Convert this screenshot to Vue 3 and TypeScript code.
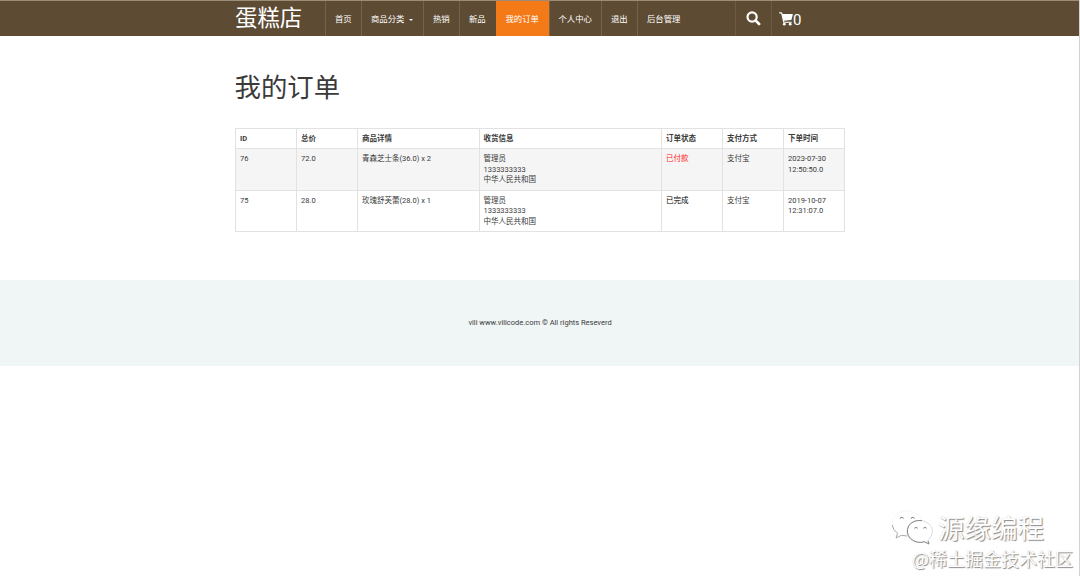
<script setup lang="ts">
interface NavItem { label: string; width: number; active?: boolean; caret?: boolean }
interface Order {
  id: number
  total: string
  detail: string
  receiver: string[]
  status: string
  paid: boolean
  payment: string
  time: string[]
}

const navItems: NavItem[] = [
  { label: '首页', width: 36 },
  { label: '商品分类', width: 62, caret: true },
  { label: '热销', width: 36 },
  { label: '新品', width: 36.5 },
  { label: '我的订单', width: 53, active: true },
  { label: '个人中心', width: 52.5 },
  { label: '退出', width: 36 },
  { label: '后台管理', width: 54 },
]

const columns: { title: string; width: number }[] = [
  { title: 'ID', width: 61 },
  { title: '总价', width: 61 },
  { title: '商品详情', width: 121.5 },
  { title: '收货信息', width: 182.5 },
  { title: '订单状态', width: 61 },
  { title: '支付方式', width: 61 },
  { title: '下单时间', width: 61 },
]

const orders: Order[] = [
  {
    id: 76, total: '72.0', detail: '青森芝士条(36.0) x 2',
    receiver: ['管理员', '1333333333', '中华人民共和国'],
    status: '已付款', paid: true, payment: '支付宝', time: ['2023-07-30', '12:50:50.0'],
  },
  {
    id: 75, total: '28.0', detail: '玫瑰舒芙蕾(28.0) x 1',
    receiver: ['管理员', '1333333333', '中华人民共和国'],
    status: '已完成', paid: false, payment: '支付宝', time: ['2019-10-07', '12:31:07.0'],
  },
]
</script>

<template>
  <div class="page">
    <header class="header">
      <div class="container bar">
        <div class="brand">蛋糕店</div>
        <nav class="nav">
          <a
            v-for="item in navItems"
            :key="item.label"
            class="nav-item"
            :class="{ active: item.active }"
            :style="{ width: item.width + 'px' }"
          >{{ item.label }}<span v-if="item.caret" class="caret"></span></a>
        </nav>
        <div class="tools">
          <a class="tool search">
            <svg width="15" height="15" viewBox="0 0 15 15">
              <circle cx="6.1" cy="6" r="4.6" fill="none" stroke="#fff" stroke-width="2.2" />
              <path d="M9.5 9.4 13.1 13" stroke="#fff" stroke-width="2.7" stroke-linecap="round" />
            </svg>
          </a>
          <a class="tool cart">
            <svg width="14" height="14" viewBox="0 0 14 14" fill="#fff">
              <path d="M0 .7Q0 .2.6.2H2.5Q3 .2 3.2.8L3.5 2H13.4Q14 2 13.8 2.7L12.5 7.5Q12.3 8 11.8 8.1L5 8.8 5.2 9.7H12.3Q12.8 9.7 12.8 10.2T12.3 10.8H4.8Q4.3 10.8 4.2 10.3L2.2 1.4H.6Q0 1.4 0 .7Z" />
              <circle cx="5.3" cy="12.2" r="1.4" />
              <circle cx="11.2" cy="12.2" r="1.4" />
            </svg>
            <span class="count">0</span>
          </a>
        </div>
      </div>
    </header>

    <main class="container main">
      <h1 class="title">我的订单</h1>
      <table class="orders">
        <colgroup>
          <col v-for="col in columns" :key="col.title" :style="{ width: col.width + 'px' }" />
        </colgroup>
        <thead>
          <tr><th v-for="col in columns" :key="col.title">{{ col.title }}</th></tr>
        </thead>
        <tbody>
          <tr v-for="order in orders" :key="order.id">
            <td>{{ order.id }}</td>
            <td>{{ order.total }}</td>
            <td>{{ order.detail }}</td>
            <td><div v-for="line in order.receiver" :key="line">{{ line }}</div></td>
            <td><span :class="order.paid ? 'paid' : 'done'">{{ order.status }}</span></td>
            <td>{{ order.payment }}</td>
            <td><div v-for="line in order.time" :key="line">{{ line }}</div></td>
          </tr>
        </tbody>
      </table>
    </main>

    <footer class="footer">vili www.vilicode.com © All rights Reseverd</footer>

    <div class="edge"></div>
    <div class="watermark">
      <div class="account">
        <svg class="wechat" width="44" height="38" viewBox="0 0 44 38">
          <g fill="#fff" stroke-linejoin="round">
            <path d="M17 3C8.500 3 2 8.500 2 15.500C2 19.500 4 23 7.500 25.300L6 30L11.500 27.300Q14 28 17 28C25 28 32 22.500 32 15.500C32 8.500 25 3 17 3Z" stroke="#f3f3f3" stroke-width=".7" />
            <path d="M2.200 17Q3 22 7.500 25.300L6 30L11.500 27.300L17 28" fill="none" stroke="#aaa" />
            <path d="M29.500 12.500C22 12.500 17 17.500 17 23.500C17 30 22.500 34.500 29.500 34.500Q32 34.500 34.500 33.800L39 36L38 32Q42.500 28.500 42.500 23.500C42.500 17.500 37 12.500 29.500 12.500Z" stroke="#ddd" />
            <path d="M32 12.600Q23 11.500 18.500 18Q15.500 25.500 20.500 30.500Q27 36 34.500 33.800L39 36L38 33" fill="none" stroke="#888" />
          </g>
          <path d="M10 10.500Q12 8 13.500 10.500M21 10.500Q23 8 24.500 10.500M24.500 20.500Q26 18 27.500 20.500M33.500 20.500Q35 18 36.500 20.500" fill="none" stroke="#888" stroke-width="1.1" />
        </svg>
        <span>源缘编程</span>
      </div>
      <div class="community">@稀土掘金技术社区</div>
    </div>
  </div>
</template>

<style>
body {
  margin: 0;
  background: #fff;
}
</style>

<style scoped>
.page {
  position: relative;
  box-sizing: border-box;
  height: 576px;
  overflow: hidden;
  color: #3a3a3a;
  font: 7.5px/10.5px Roboto, "Noto Sans CJK SC", sans-serif;
}

.container {
  width: 610px;
  margin: 0 235px;
}

.header {
  box-sizing: border-box;
  height: 36px;
  background: #5d4b33;
  border-top: 1px solid #9b8d76;
  color: #fff;
}

.bar {
  display: flex;
  height: 35px;
}

.brand {
  width: 90px;
  font-size: 22.4px;
  line-height: 34px;
  white-space: nowrap;
}

.nav {
  display: flex;
}

.nav-item {
  display: flex;
  box-sizing: border-box;
  flex: none;
  align-items: center;
  padding: 1px 0 0 9px;
  border-left: 1px solid #75644b;
  font-size: 8.4px;
  white-space: nowrap;
}

.nav-item.active {
  background: #f47a18;
  border-left-color: #f47a18;
}

.caret {
  margin: 1px 0 0 4px;
  border: 2px solid transparent;
  border-top-color: #fff;
  border-bottom: 0;
}

.tools {
  display: flex;
  margin-left: 44px;
}

.tool {
  display: flex;
  box-sizing: border-box;
  align-items: center;
  width: 36px;
  border-left: 1px solid #6d5b42;
}

.search {
  padding-left: 10px;
}

.cart {
  padding-left: 7px;
}

.tool svg {
  flex: none;
}

.count {
  padding-top: 3px;
  font-size: 15px;
  line-height: 18px;
}

.title {
  margin: 0 0 0 -0.5px;
  padding-top: 32px;
  font-size: 26.4px;
  font-weight: 400;
  line-height: 40px;
}

.main {
  height: 244px;
}

.orders {
  width: 610px;
  margin-top: 20px;
  border-collapse: collapse;
  table-layout: fixed;
}

.orders th,
.orders td {
  box-sizing: border-box;
  padding: 4.5px 4px 4px;
  border: 1px solid #e2e2e2;
  text-align: left;
  vertical-align: top;
  white-space: nowrap;
}

.orders th {
  height: 20px;
  font-weight: 700;
}

.orders td {
  height: 41px;
}

.orders tbody tr:nth-child(odd) {
  background: #f5f5f5;
}

.orders tbody tr:first-child td {
  height: 42px;
  padding-top: 5px;
}

.paid {
  color: #f22;
}

.done {
  color: #000;
}

.footer {
  height: 85.5px;
  background: #f0f5f6;
  line-height: 85px;
  text-align: center;
}

.edge {
  position: absolute;
  top: 0;
  right: 0;
  width: 1px;
  height: 576px;
  background: #d2d2d2;
}

.watermark {
  position: absolute;
  right: 7px;
  bottom: 5px;
  color: #fff;
  font-family: "Noto Sans CJK SC", sans-serif;
  white-space: nowrap;
  text-shadow: 1px 1px 1px #888, 0 0 1px #ccc;
}

.account {
  display: flex;
  align-items: center;
  height: 38px;
  margin-left: -22px;
  font-size: 26.5px;
}

.account span {
  margin-left: 4px;
}

.community {
  margin-top: -1px;
  font-size: 18px;
  line-height: 26px;
}
</style>
